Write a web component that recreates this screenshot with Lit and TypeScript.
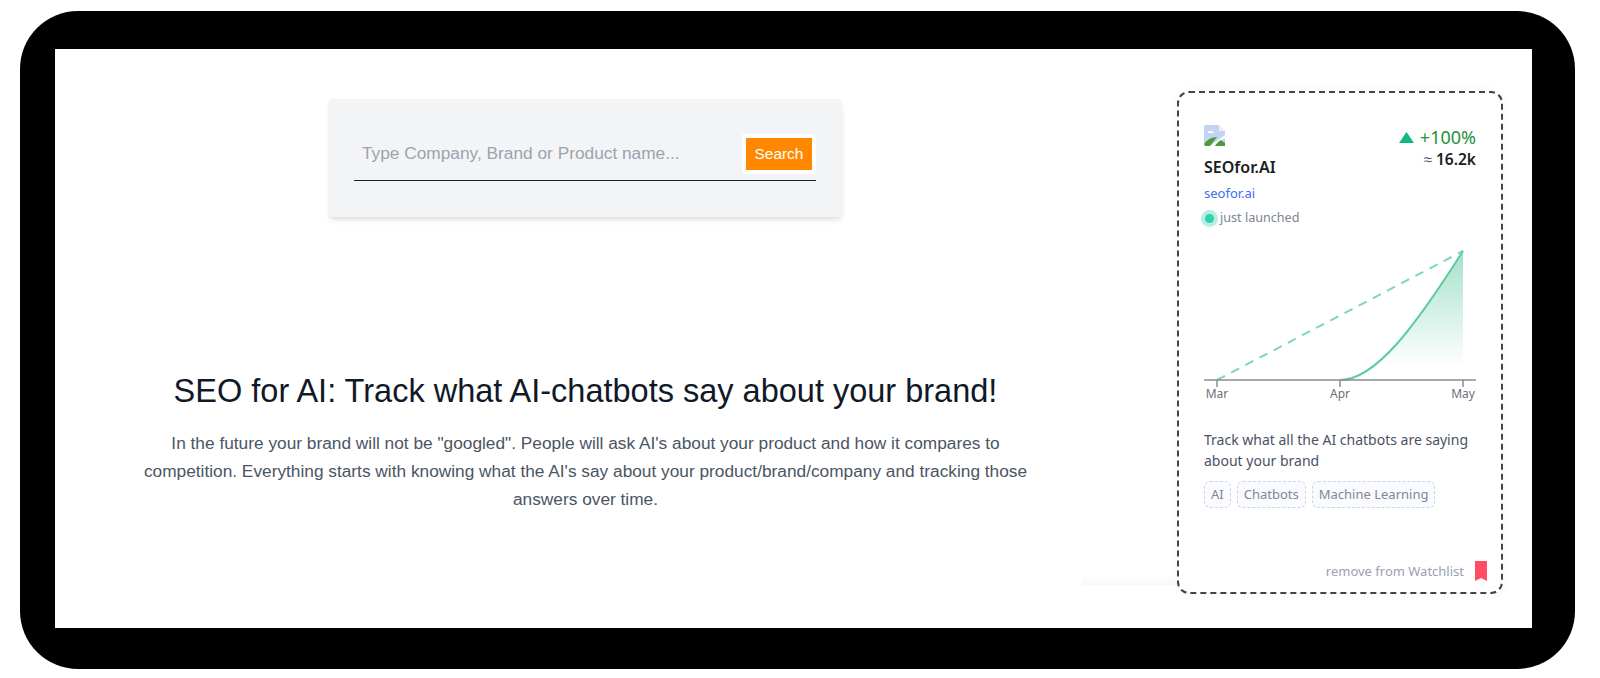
import { LitElement, html, css, svg } from "lit";
import { customElement } from "lit/decorators.js";

const TAGS = ["AI", "Chatbots", "Machine Learning"];

@customElement("trend-card")
class TrendCard extends LitElement {
  static styles = css`
    :host {
      display: flex;
      flex-direction: column;
      box-sizing: border-box;
      width: 326px;
      height: 503px;
      padding: 32px 15px 0 25px;
      border: 2px dashed #3f444d;
      border-radius: 12px;
      background: #fff;
      box-shadow: 0 0 12px #f6f6fa;
      font-family: "Noto Sans", sans-serif;
    }
    .head {
      display: flex;
      justify-content: space-between;
      padding-right: 10px;
    }
    .broken {
      display: block;
      width: 21px;
      height: 21px;
    }
    .name {
      margin-top: 9px;
      font-size: 16px;
      line-height: 24px;
      font-weight: 600;
      color: #1a1d21;
    }
    .link {
      margin-top: 5px;
      font-size: 13px;
      line-height: 18px;
      color: #3b6ff5;
    }
    .status {
      display: flex;
      align-items: center;
      gap: 5px;
      margin-top: 7px;
      margin-left: 1px;
      font-size: 12.6px;
      line-height: 18px;
      color: #7b8494;
    }
    .dot {
      width: 9px;
      height: 9px;
      border-radius: 50%;
      background: #2fd3ab;
      box-shadow: 0 0 0 4px #b9ede0;
      margin-right: 1px;
    }
    .stats {
      text-align: right;
      padding-top: 1px;
    }
    .growth {
      display: flex;
      align-items: center;
      justify-content: flex-end;
      gap: 6px;
      font-size: 18px;
      line-height: 22px;
      color: #23923a;
    }
    .tri {
      width: 15px;
      height: 11px;
    }
    .vol {
      margin-top: 1px;
      font-size: 15.5px;
      line-height: 20px;
      font-weight: 600;
      color: #1a1d21;
    }
    .vol span {
      color: #555b66;
      font-weight: 400;
    }
    .chart {
      display: block;
      width: 272px;
      height: 165px;
      margin-top: 18px;
    }
    .chart text {
      font-size: 12px;
      fill: #6c7079;
      text-anchor: middle;
    }
    .desc {
      width: 275px;
      margin-top: 19px;
      font-size: 14px;
      line-height: 21px;
      color: #4a5262;
    }
    .tags {
      display: flex;
      gap: 6px;
      margin-top: 10px;
    }
    .tag {
      padding: 0 6px;
      height: 27px;
      box-sizing: border-box;
      border: 1px dashed #cfd3ea;
      border-radius: 6px;
      background: #fafbff;
      font-size: 13px;
      line-height: 25px;
      color: #7f8797;
    }
    .foot {
      display: flex;
      align-items: center;
      justify-content: flex-end;
      gap: 11px;
      margin-top: auto;
      margin-bottom: 11px;
      margin-right: -1px;
      font-size: 13px;
      line-height: 20px;
      color: #9aa1af;
    }
    .mark {
      width: 12px;
      height: 20px;
    }
  `;

  private _chart() {
    return svg`
      <defs>
        <linearGradient id="fade" gradientUnits="userSpaceOnUse" x1="0" y1="6" x2="0" y2="122">
          <stop offset="0" stop-color="#5cc9a0" stop-opacity="0.55"></stop>
          <stop offset="1" stop-color="#5cc9a0" stop-opacity="0"></stop>
        </linearGradient>
      </defs>
      <path d="M136 135C172 135 212 80 259 6V135Z" fill="url(#fade)"></path>
      <path d="M13 135L259 6" fill="none" stroke="#7fd6b4" stroke-width="2" stroke-dasharray="9 7"></path>
      <path d="M136 135C172 135 212 80 259 6" fill="none" stroke="#5fc9a0" stroke-width="2"></path>
      <path d="M0 135H272M13 135V142M136 135V142M259 135V142" fill="none" stroke="#8b8d92" stroke-width="1.5"></path>
      <text x="13" y="153">Mar</text>
      <text x="136" y="153">Apr</text>
      <text x="259" y="153">May</text>
    `;
  }

  render() {
    return html`
      <div class="head">
        <div>
          <svg class="broken" viewBox="0 0 21 21">
            <path d="M0 1.500A1.500 1.500 0 0 1 1.500 0H15L21 6V21H1.500A1.500 1.500 0 0 1 0 19.500Z" fill="#c3d4f2"></path>
            <path d="M15 0L21 6H15Z" fill="#eef1f6"></path>
            <path d="M3 8Q6 4 9 7L11 8H5Z" fill="#fff"></path>
            <path d="M0 19Q5 12 13 12L6 21H1.500Z" fill="#4c9a3a"></path>
            <path d="M6 21L21 10V13L10 21Z" fill="#fff"></path>
            <path d="M14 17L17 15L21 18V21H11Z" fill="#4c9a3a"></path>
          </svg>
          <div class="name">SEOfor.AI</div>
        </div>
        <div class="stats">
          <div class="growth">
            <svg class="tri" viewBox="0 0 15 11"><path d="M7.500 0L15 11H0Z" fill="#10b981"></path></svg>
            +100%
          </div>
          <div class="vol"><span>≈</span> 16.2k</div>
        </div>
      </div>
      <div class="link">seofor.ai</div>
      <div class="status"><i class="dot"></i>just launched</div>
      <svg class="chart" viewBox="0 0 272 165">${this._chart()}</svg>
      <div class="desc">Track what all the AI chatbots are saying about your brand</div>
      <div class="tags">${TAGS.map((t) => html`<div class="tag">${t}</div>`)}</div>
      <div class="foot">
        remove from Watchlist
        <svg class="mark" viewBox="0 0 12 20"><path d="M0 0H12V20L6 17L0 20Z" fill="#ff4d63"></path></svg>
      </div>
    `;
  }
}

@customElement("app-root")
class AppRoot extends LitElement {
  static styles = css`
    :host {
      display: block;
      height: 678px;
      padding: 11px 25px 9px 20px;
      box-sizing: border-box;
      background: #fff;
      font-family: "Liberation Sans", Arial, sans-serif;
    }
    .frame {
      height: 100%;
      box-sizing: border-box;
      padding: 38px 43px 41px 35px;
      background: #000;
      border-radius: 58px;
    }
    .screen {
      display: flex;
      height: 100%;
      background: #fff;
    }
    .main {
      flex: 0 0 1061px;
      display: flex;
      flex-direction: column;
      align-items: center;
    }
    .search {
      box-sizing: border-box;
      width: 513px;
      height: 118px;
      margin-top: 50px;
      padding: 29px 26px 0 25px;
      border-radius: 4px;
      background: #f3f4f6;
      box-shadow: 0 4px 6px -1px rgba(0, 0, 0, 0.1), 0 2px 4px -1px rgba(0, 0, 0, 0.06);
    }
    .field {
      display: flex;
      align-items: center;
      justify-content: space-between;
      height: 53px;
      padding-left: 8px;
      padding-bottom: 1px;
      box-sizing: border-box;
      border-bottom: 1px solid #1f2024;
    }
    .hint {
      font-size: 17.3px;
      color: #9ca3af;
    }
    .btn {
      box-sizing: border-box;
      width: 74px;
      height: 40px;
      border: 4px solid #fff;
      border-radius: 2px;
      background: #ff8800;
      color: #fff;
      font: 15.4px "Liberation Sans", Arial, sans-serif;
      padding: 0;
    }
    h1 {
      margin: 154px 0 0;
      font-size: 32.5px;
      line-height: 40px;
      font-weight: 400;
      color: #111827;
    }
    p {
      width: 900px;
      margin: 18px 0 0;
      font-size: 17.3px;
      line-height: 28px;
      text-align: center;
      color: #4b5563;
    }
    .side {
      position: relative;
      padding-top: 42px;
      padding-left: 61px;
    }
    .fade {
      position: absolute;
      left: -34px;
      top: 526px;
      width: 95px;
      height: 10px;
      background: linear-gradient(to bottom, #fff, #f8f8f8);
    }
    trend-card {
      position: relative;
    }
  `;

  render() {
    return html`
      <div class="frame">
        <div class="screen">
          <div class="main">
            <div class="search">
              <div class="field">
                <span class="hint">Type Company, Brand or Product name...</span>
                <button class="btn">Search</button>
              </div>
            </div>
            <h1>SEO for AI: Track what AI-chatbots say about your brand!</h1>
            <p>
              In the future your brand will not be "googled". People will ask AI's about your product and how it
              compares to competition. Everything starts with knowing what the AI's say about your
              product/brand/company and tracking those answers over time.
            </p>
          </div>
          <div class="side">
            <div class="fade"></div>
            <trend-card></trend-card>
          </div>
        </div>
      </div>
    `;
  }
}
